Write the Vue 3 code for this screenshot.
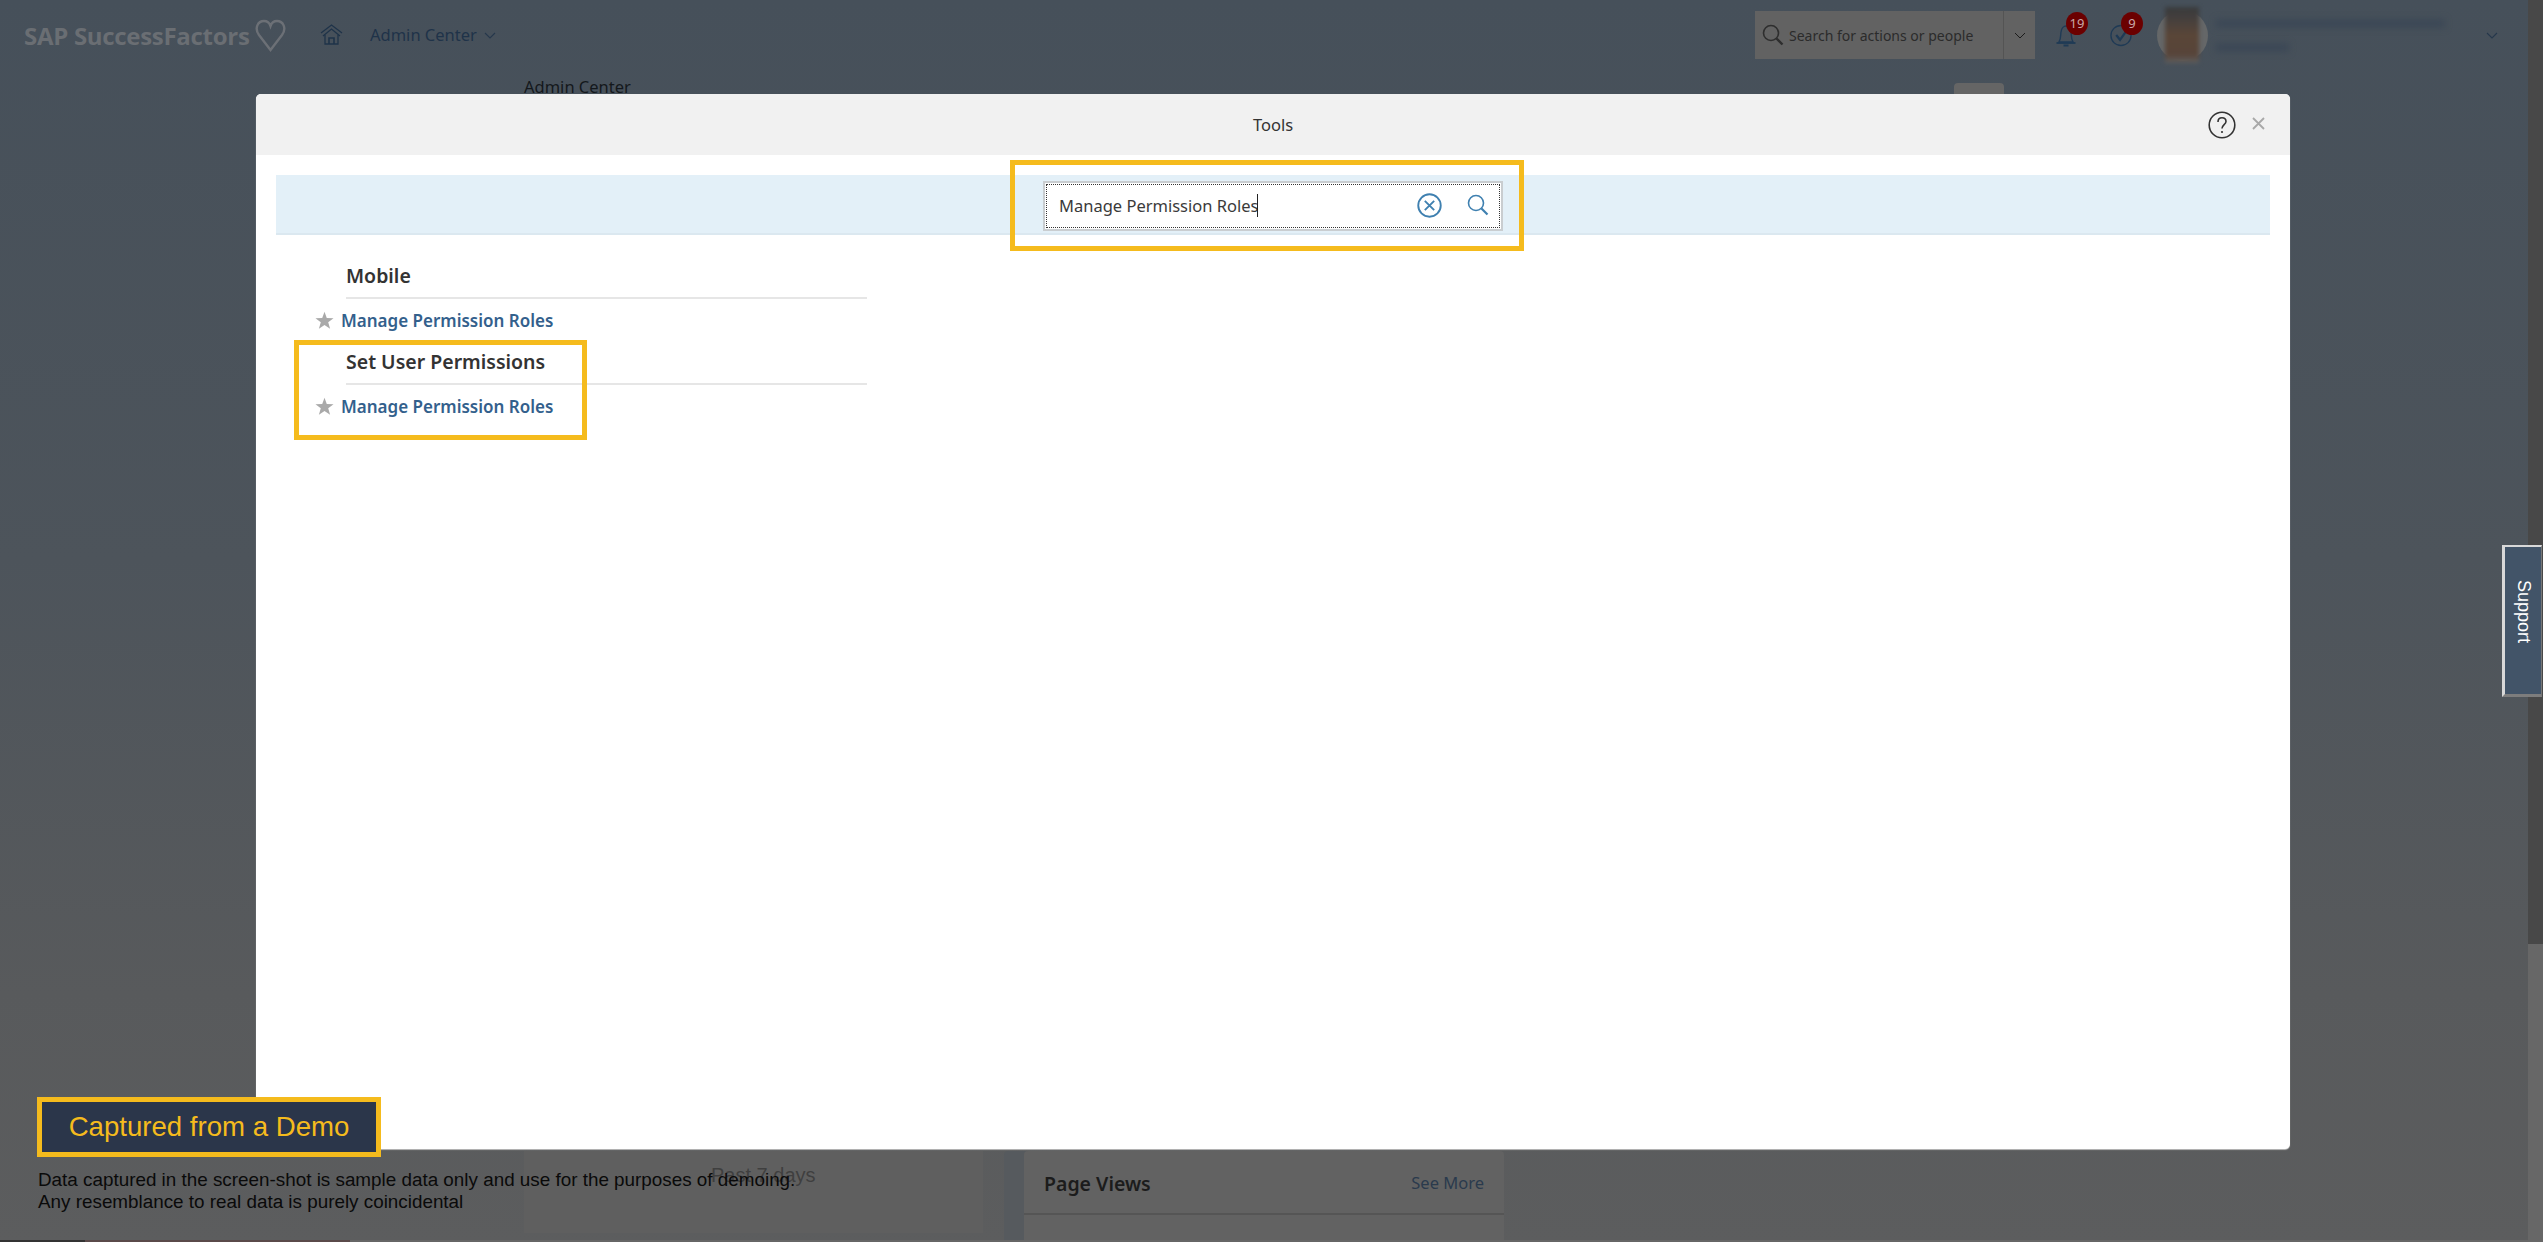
<script setup>
import { ref } from 'vue'

const searchText = ref('Manage Permission Roles')

const groups = [
  { title: 'Mobile', links: ['Manage Permission Roles'] },
  { title: 'Set User Permissions', links: ['Manage Permission Roles'] }
]
</script>

<template>
  <div class="page">
    <div class="main">
      <header class="nav">
        <span class="logo">SAP SuccessFactors</span>
        <svg class="heart" viewBox="0 0 31 33" fill="none" stroke="#6c7076" stroke-width="2.4">
          <path d="M15.5 31 L4 16 C-1 9 3 2 9 2 C12 2 14.5 4 15.5 7 C16.5 4 19 2 22 2 C28 2 32 9 27 16 Z" />
        </svg>
        <svg class="home" viewBox="0 0 23 21" fill="none" stroke="#1f3349" stroke-width="1.3">
          <path d="M1 9 L11.5 1 L22 9" />
          <path d="M3 12 L11.5 5 L20 12" />
          <path d="M5 11 V20 H18 V11" />
          <path d="M9 20 V14 H14 V20" stroke-width="1.6" />
        </svg>
        <span class="module">Admin Center</span>
        <svg class="chev module-chev" viewBox="0 0 12 7" fill="none" stroke="#26384c" stroke-width="1.1">
          <path d="M1 1 L6 6 L11 1" />
        </svg>

        <div class="nav-right">
          <div class="search">
            <div class="search-field">
              <svg class="search-icon" viewBox="0 0 22 22" fill="none" stroke="#2e2e2e" stroke-width="1.6">
                <circle cx="9" cy="9" r="7.5" />
                <path d="M14.5 14.5 L20.5 20.5" stroke-width="2.4" />
              </svg>
              <span class="search-hint">Search for actions or people</span>
            </div>
            <div class="search-drop">
              <svg class="chev" viewBox="0 0 12 7" fill="none" stroke="#1b1b1b" stroke-width="1">
                <path d="M1 1 L6 6 L11 1" />
              </svg>
            </div>
          </div>

          <div class="notify">
            <svg class="notify-icon" viewBox="0 0 22 23" fill="none" stroke="#1f3a55" stroke-width="1.4">
              <path d="M4 18 C6 15 5.5 11 6 8 C6.5 4 9 2 11 2 C13 2 15.5 4 16 8 C16.5 11 16 15 18 18 Z" />
              <path d="M1.5 19 H20.5" stroke-width="1.8" />
              <path d="M8.5 21.5 H13.5" stroke-width="2" />
            </svg>
            <span class="badge">19</span>
          </div>
          <div class="notify notify-todo">
            <svg class="notify-icon" viewBox="0 0 23 23" fill="none" stroke="#1f3a55" stroke-width="1.4">
              <circle cx="11.5" cy="11.5" r="10.5" />
              <path d="M6.5 11 L10.5 16 L17 7" stroke-width="2.4" />
            </svg>
            <span class="badge">9</span>
          </div>

          <div class="avatar">
            <div class="avatar-face"></div>
          </div>
          <div class="user">
            <div class="user-line user-line-long"></div>
            <div class="user-line user-line-short"></div>
          </div>
          <svg class="chev user-chev" viewBox="0 0 12 7" fill="none" stroke="#26384c" stroke-width="1.1">
            <path d="M1 1 L6 6 L11 1" />
          </svg>
        </div>
      </header>

      <div class="crumb-row">
        <div class="crumb">Admin Center</div>
        <div class="page-tab"></div>
      </div>

      <div class="spacer"></div>

      <div class="cards">
        <div class="card-wrap">
          <div class="card-past">Past 7 days</div>
        </div>
        <div class="card-views">
          <div class="card-views-head">
            <span class="card-views-title">Page Views</span>
            <span class="card-views-more">See More</span>
          </div>
        </div>
      </div>
      <div class="bottom-strip"></div>
    </div>

    <div class="scrollbar">
      <div class="scroll-thumb"></div>
    </div>

    <div class="support"><span>Support</span></div>

    <div class="modal">
      <div class="modal-head">
        <span></span>
        <span class="modal-title">Tools</span>
        <div class="modal-actions">
          <svg class="help" viewBox="0 0 28 28" fill="none" stroke="#333" stroke-width="1.6">
            <circle cx="14" cy="14" r="12.8" />
            <path d="M10 11 C10 8 12 6.8 14 6.8 C16.5 6.8 18 8.5 18 10.5 C18 13.5 14 14 14 17.5" />
            <circle cx="14" cy="21" r="1.1" fill="#333" stroke="none" />
          </svg>
          <svg class="close" viewBox="0 0 15 15" fill="none" stroke="#a8a8a8" stroke-width="1.8">
            <path d="M2 2 L13 13 M13 2 L2 13" />
          </svg>
        </div>
      </div>

      <div class="band">
        <div class="tool-search">
          <div class="tool-input">
            <span class="tool-text">{{ searchText }}</span><span class="caret"></span>
          </div>
          <svg class="clear-icon" viewBox="0 0 24 24" fill="none" stroke="#3f80b0" stroke-width="1.8">
            <circle cx="12" cy="12" r="10.8" />
            <path d="M7.5 7.5 L16.5 16.5 M16.5 7.5 L7.5 16.5" />
          </svg>
          <svg class="find-icon" viewBox="0 0 22 22" fill="none" stroke="#3f80b0" stroke-width="1.6">
            <circle cx="9" cy="9" r="7.5" />
            <path d="M14.5 14.5 L20.5 20.5" stroke-width="2.2" />
          </svg>
        </div>
      </div>

      <div class="results">
        <div v-for="group in groups" :key="group.title" class="group">
          <div class="group-title">{{ group.title }}</div>
          <div v-for="link in group.links" :key="link" class="result-row">
            <svg class="star" viewBox="0 0 20 20">
              <path fill="#a9a9a9" d="M10 0.8 L12.4 7.4 L19.5 7.6 L13.9 11.9 L15.9 18.8 L10 14.8 L4.1 18.8 L6.1 11.9 L0.5 7.6 L7.6 7.4 Z" />
            </svg>
            <a class="result-link">{{ link }}</a>
          </div>
        </div>
      </div>

      <div class="mark mark-search"></div>
      <div class="mark mark-group"></div>
    </div>

    <div class="demo-note">
      <div class="demo-tag">Captured from a Demo</div>
      <p class="demo-text">Data captured in the screen-shot is sample data only and use for the purposes of demoing.<br>Any resemblance to real data is purely coincidental</p>
    </div>
  </div>
</template>

<style>
html, body {
  margin: 0;
  overflow: hidden;
}
</style>

<style scoped>
.page {
  position: relative;
  display: flex;
  width: 2543px;
  height: 1242px;
  overflow: hidden;
  background: linear-gradient(180deg, #46505a 0%, #4d545b 45%, #585a5c 80%, #5c5d5e 100%);
  font-family: "Noto Sans", "Open Sans", sans-serif;
}
.main {
  flex: 1;
  display: flex;
  flex-direction: column;
  min-width: 0;
}

/* top bar */
.nav {
  display: flex;
  align-items: center;
  height: 70px;
  padding-left: 24px;
  padding-right: 30px;
  flex-shrink: 0;
}
.logo {
  width: 227px;
  font-family: "Open Sans", sans-serif;
  font-size: 24px;
  font-weight: 700;
  letter-spacing: -0.3px;
  white-space: nowrap;
  color: #6a6e73;
}
.heart {
  width: 31px;
  height: 33px;
  margin-left: 4px;
}
.home {
  width: 23px;
  height: 21px;
  margin-left: 34px;
  margin-top: -2px;
}
.module {
  width: 106px;
  margin-left: 27px;
  margin-top: -2px;
  font-size: 16.5px;
  white-space: nowrap;
  color: #1f3349;
}
.chev {
  width: 12px;
  height: 7px;
}
.module-chev {
  margin-left: 8px;
}
.nav-right {
  display: flex;
  align-items: center;
  margin-left: auto;
}
.search {
  display: flex;
  width: 280px;
  height: 48px;
  background: #626262;
  margin-right: 20px;
}
.search-field {
  flex: 1;
  display: flex;
  align-items: center;
  padding-left: 7px;
}
.search-icon {
  width: 22px;
  height: 22px;
}
.search-hint {
  margin-left: 5px;
  font-size: 14px;
  white-space: nowrap;
  color: #2b2b2b;
}
.search-drop {
  width: 31px;
  display: flex;
  align-items: center;
  justify-content: center;
  border-left: 1px solid #545454;
}
.notify {
  position: relative;
  width: 22px;
  height: 23px;
  margin-top: 1px;
}
.notify-todo {
  margin-left: 33px;
}
.notify-icon {
  display: block;
  width: 22px;
  height: 23px;
}
.badge {
  position: absolute;
  top: -12px;
  left: 11px;
  width: 22px;
  height: 23px;
  border-radius: 50%;
  background: #6b0000;
  color: #c9a8a8;
  font-size: 13px;
  line-height: 23px;
  text-align: center;
}
.avatar {
  position: relative;
  width: 51px;
  height: 51px;
  margin-left: 25px;
  border-radius: 50%;
  background: #656768;
}
.avatar-face {
  position: absolute;
  top: -3px;
  left: 8px;
  width: 34px;
  height: 56px;
  background: linear-gradient(180deg, #383a3c 0%, #443f3d 20%, #5a4638 50%, #574439 85%, #5f5f5f 100%);
  filter: blur(2px);
}
.user {
  width: 229px;
  margin-left: 8px;
}
.user-line {
  height: 9px;
  background: #3c4856;
  filter: blur(3px);
}
.user-line-long {
  width: 229px;
}
.user-line-short {
  width: 73px;
  margin-top: 15px;
}
.user-chev {
  margin-left: 41px;
}

/* page behind the dialog */
.crumb-row {
  display: flex;
  height: 40px;
  padding-left: 524px;
  flex-shrink: 0;
}
.crumb {
  width: 1430px;
  margin-top: 5px;
  font-size: 16.5px;
  line-height: 24px;
  color: #14181c;
}
.page-tab {
  width: 50px;
  height: 27px;
  margin-top: 13px;
  border-radius: 4px 4px 0 0;
  background: #656565;
}
.spacer {
  flex: 1;
}
.cards {
  display: flex;
  height: 89px;
  margin-left: 524px;
  flex-shrink: 0;
}
.card-wrap {
  width: 459px;
  height: 82px;
  background: #5f5f5f;
}
.card-past {
  padding: 13px 0 0 187px;
  font-family: "Liberation Sans", sans-serif;
  font-size: 20px;
  color: #3f3f3f;
}
.card-views {
  width: 480px;
  margin-left: 41px;
  border-radius: 4px 4px 0 0;
  background: #626262;
  box-shadow: -20px 0 0 #565a5e;
}
.card-views-head {
  display: flex;
  align-items: center;
  justify-content: space-between;
  height: 62px;
  padding: 0 20px;
  border-bottom: 2px solid #555;
}
.card-views-title {
  padding-top: 2px;
  font-size: 19.5px;
  font-weight: 600;
  color: #1c1c1c;
}
.card-views-more {
  font-size: 16.5px;
  color: #2a3a4d;
}
.bottom-strip {
  height: 2px;
  background: linear-gradient(90deg, #333 0, #333 85px, #5a4a4a 85px, #5a4a4a 350px, #666 350px);
  flex-shrink: 0;
}
.scrollbar {
  width: 15px;
  background: #676767;
  flex-shrink: 0;
}
.scroll-thumb {
  height: 944px;
  background: #484848;
}
.support {
  position: absolute;
  top: 545px;
  left: 2502px;
  display: flex;
  align-items: center;
  justify-content: center;
  box-sizing: border-box;
  width: 40px;
  height: 152px;
  background: #425468;
  border-top: 2px solid #d8d8d8;
  border-left: 3px solid #d8d8d8;
  border-right: 1px solid #777;
  border-bottom: 3px solid #7d7d7d;
  color: #fff;
  font-family: "Liberation Sans", sans-serif;
  font-size: 18px;
}
.support span {
  writing-mode: vertical-rl;
  margin-bottom: 18px;
}

/* dialog */
.modal {
  position: absolute;
  top: 94px;
  left: 256px;
  width: 2034px;
  height: 1055px;
  border-radius: 5px;
  background: #fff;
  box-shadow: 0 1px 1px #bbb;
}
.modal-head {
  display: grid;
  grid-template-columns: 1fr auto 1fr;
  align-items: center;
  height: 61px;
  border-radius: 5px 5px 0 0;
  background: #f1f1f1;
}
.modal-title {
  font-size: 16.5px;
  color: #333;
}
.modal-actions {
  display: flex;
  align-items: center;
  justify-content: flex-end;
  gap: 15px;
  padding-right: 24px;
}
.help {
  width: 28px;
  height: 28px;
}
.close {
  width: 15px;
  height: 15px;
  margin-top: -2px;
}
.band {
  display: flex;
  justify-content: center;
  box-sizing: border-box;
  height: 60px;
  margin: 20px 20px 0 20px;
  padding-top: 6px;
  background: #e3f0f8;
  border-bottom: 2px solid #dbe8f0;
}
.tool-search {
  display: flex;
  align-items: center;
  box-sizing: border-box;
  width: 460px;
  height: 50px;
  padding-left: 14px;
  padding-bottom: 2px;
  background: #fff;
  border: 2px solid #c9cdd0;
  outline: 1px dotted #333;
  outline-offset: -4px;
}
.tool-input {
  flex: 1;
  display: flex;
  align-items: center;
  min-width: 0;
  font-size: 16.5px;
  color: #3a3a3a;
  white-space: nowrap;
}
.caret {
  width: 1px;
  height: 23px;
  margin-left: -1px;
  background: #222;
}
.clear-icon {
  width: 25px;
  height: 25px;
}
.find-icon {
  width: 22px;
  height: 22px;
  margin: 0 12px 0 25px;
}
.results {
  width: 551px;
  margin-left: 60px;
  padding-top: 20px;
}
.group-title {
  box-sizing: border-box;
  height: 44px;
  margin-left: 30px;
  padding-top: 8px;
  border-bottom: 2px solid #e6e6e6;
  font-size: 19.5px;
  font-weight: 600;
  line-height: 26px;
  color: #333;
}
.result-row {
  display: flex;
  align-items: center;
  height: 42px;
}
.star {
  width: 19px;
  height: 19px;
  margin-left: -1px;
}
.result-link {
  margin-left: 7px;
  font-size: 17px;
  font-weight: 600;
  color: #33608c;
  cursor: pointer;
}
.mark {
  position: absolute;
  box-sizing: border-box;
  border: 5px solid #f5bb1d;
}
.mark-search {
  top: 66px;
  left: 754px;
  width: 514px;
  height: 91px;
}
.mark-group {
  top: 246px;
  left: 38px;
  width: 293px;
  height: 100px;
}

/* demo note */
.demo-note {
  position: absolute;
  top: 1097px;
  left: 37px;
}
.demo-tag {
  box-sizing: border-box;
  width: 344px;
  height: 60px;
  border: 5px solid #f5bb1d;
  background: #2b364a;
  color: #f5bb1d;
  font-family: "Liberation Sans", sans-serif;
  font-size: 27.6px;
  line-height: 50px;
  text-align: center;
}
.demo-text {
  margin: 12px 0 0 1px;
  font-family: "Liberation Sans", sans-serif;
  font-size: 18.85px;
  line-height: 22px;
  color: #0a0a0a;
  white-space: nowrap;
}
</style>
